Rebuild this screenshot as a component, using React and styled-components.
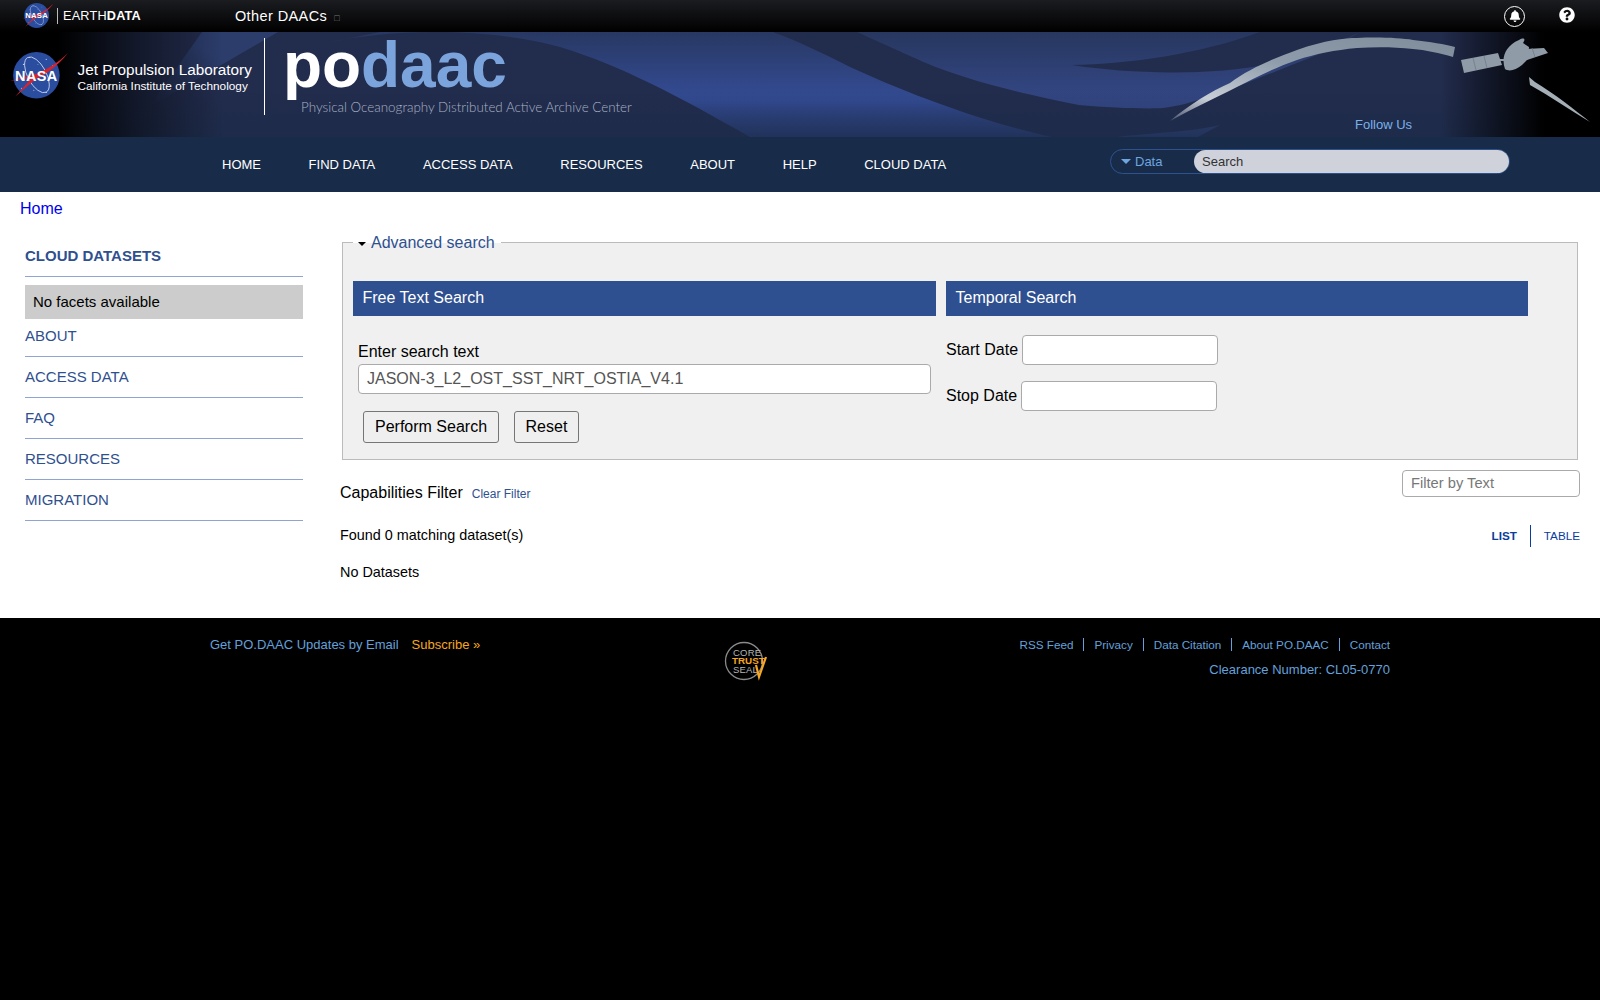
import React from 'react';
import styled, { createGlobalStyle } from 'styled-components';
import { FaBell, FaQuestionCircle } from 'react-icons/fa';

const Global = createGlobalStyle`
  html, body { margin: 0; padding: 0; background: #000; }
  body { font-family: "Liberation Sans", Arial, sans-serif; color: #000; }
  * { box-sizing: border-box; }
  a { text-decoration: none; }
`;

const Page = styled.div`
  width: 1600px;
  min-height: 1000px;
  display: flex;
  flex-direction: column;
  overflow: hidden;
`;

const TopBar = styled.div`
  height: 32px;
  display: flex;
  align-items: center;
  padding-left: 22px;
  background: linear-gradient(#1b1c20, #000);
  color: #fff;
`;
const EarthMark = styled.span`
  font-size: 12.7px;
  letter-spacing: .2px;
  border-left: 1px solid #bbb;
  padding-left: 5px;
  margin-left: 3px;
  line-height: 16px;
  b { font-weight: 700; }
`;
const Daacs = styled.span`
  margin-left: 94px;
  font-size: 14.5px;
  letter-spacing: .4px;
  i { font-style: normal; font-size: 9px; color: #777; margin-left: 7px; letter-spacing: 0; }
`;
const TopIcons = styled.div`
  margin-left: auto;
  display: flex;
  align-items: center;
  gap: 34px;
  padding-right: 25px;
`;
const BellRing = styled.span`
  width: 21px;
  height: 21px;
  border: 1.5px solid #fff;
  border-radius: 50%;
  display: flex;
  align-items: center;
  justify-content: center;
  font-size: 12px;
  color: #fff;
`;
const Help = styled.span`
  display: flex;
  font-size: 16px;
  color: #fff;
  margin-top: -2px;
`;

const Banner = styled.div`
  position: relative;
  height: 105px;
  background: #1f2b4b;
  display: flex;
  align-items: flex-start;
  padding-left: 9px;
  color: #fff;
`;
const BannerArt = styled.svg`
  position: absolute;
  inset: 0;
  width: 100%;
  height: 100%;
`;
const BannerItem = styled.div`
  position: relative;
  display: flex;
  margin-top: ${p => p.$top}px;
`;
const Jpl = styled.div`
  position: relative;
  margin: 29px 0 0 8.5px;
  width: 176px;
`;
const JplName = styled.div`
  font-size: 15.3px;
  line-height: 18px;
  white-space: nowrap;
`;
const JplSub = styled.div`
  font-size: 11.8px;
  line-height: 14px;
  white-space: nowrap;
`;
const BannerRule = styled.div`
  position: relative;
  width: 1px;
  height: 77px;
  background: #fff;
  margin: 6px 18px 0 10.5px;
`;
const FollowUs = styled.a`
  position: absolute;
  left: 1355px;
  bottom: 5px;
  font-size: 13px;
  color: #7ab2ea;
`;

const Nav = styled.nav`
  height: 55px;
  background: #182c4a;
  display: flex;
  align-items: center;
  padding: 0 90px 0 222px;
`;
const NavLinks = styled.div`
  display: flex;
  gap: 47.6px;
`;
const NavLink = styled.a`
  font-size: 13px;
  color: #fff;
  white-space: nowrap;
`;
const SearchBox = styled.div`
  margin-left: auto;
  margin-top: -6px;
  width: 400px;
  height: 25px;
  display: flex;
  border: 1px solid #2c5290;
  border-radius: 13px;
`;
const Scope = styled.div`
  width: 83px;
  display: flex;
  align-items: center;
  gap: 4px;
  padding-left: 10px;
  font-size: 13px;
  color: #6ea6e0;
`;
const Caret = styled.span`
  width: 0;
  height: 0;
  border-left: 5px solid transparent;
  border-right: 5px solid transparent;
  border-top: 5px solid #6ea6e0;
`;
const SearchText = styled.div`
  flex: 1;
  background: #cfd2da;
  border-radius: 12px;
  font-size: 13px;
  line-height: 23px;
  color: #333;
  padding-left: 8px;
`;

const Body = styled.div`
  background: #fff;
  height: 426px;
  padding-left: 20px;
`;
const Crumb = styled.a`
  display: block;
  height: 33px;
  padding-top: 8px;
  font-size: 16px;
  line-height: 18px;
  color: #0000ee;
`;
const Columns = styled.div`
  display: flex;
  padding-left: 5px;
`;
const Side = styled.aside`
  width: 278px;
  margin-right: 37px;
  padding-top: 22px;
`;
const SideTitle = styled.div`
  font-size: 15px;
  font-weight: 700;
  color: #2f5090;
  line-height: 18px;
  padding-bottom: 11px;
  border-bottom: 1px solid #8fa5d0;
`;
const Facets = styled.div`
  margin-top: 8px;
  height: 34px;
  background: #ccc;
  font-size: 15px;
  line-height: 34px;
  padding-left: 8px;
`;
const SideLink = styled.a`
  display: block;
  height: 41px;
  padding-top: 11px;
  font-size: 15px;
  line-height: 18px;
  color: #2f5090;
  border-bottom: 1px solid #8fa5d0;
  &:first-of-type { height: 38px; padding-top: 8px; }
`;
const Main = styled.div`
  width: 1240px;
`;
const Field = styled.fieldset`
  margin: 8px 0 0 2px;
  padding: 0 10px;
  width: 1236px;
  height: 227px;
  background: #f0f0f0;
  border: 1px solid #bbb;
  background-clip: padding-box;
`;
const Legend = styled.legend`
  display: flex;
  align-items: center;
  padding: 0 6px 0 5px;
  margin-left: 0;
  font-size: 16px;
  line-height: 18px;
  color: #2f5090;
  transform: translateY(1px);
`;
const LegendCaret = styled.span`
  width: 0;
  height: 0;
  border-left: 4px solid transparent;
  border-right: 4px solid transparent;
  border-top: 4px solid #000;
  margin: 2px 5px 0 0;
`;
const Panels = styled.div`
  display: flex;
  gap: 10px;
  padding-top: 30px;
`;
const Panel = styled.div`
  width: ${p => p.$w}px;
`;
const PanelHead = styled.div`
  height: 35px;
  background: #2f5090;
  color: #fff;
  font-size: 16px;
  line-height: 33px;
  padding-left: 9.5px;
`;
const PanelBody = styled.div`
  padding: ${p => p.$top}px 5px 0 ${p => p.$left}px;
`;
const FieldLabel = styled.div`
  font-size: 16px;
  line-height: 18px;
  margin-bottom: 3px;
`;
const TextField = styled.div`
  width: 573px;
  height: 30px;
  background: #fff;
  border: 1px solid #aaa;
  border-radius: 4px;
  font-size: 16px;
  line-height: 28px;
  color: #555;
  padding-left: 8px;
`;
const Actions = styled.div`
  display: flex;
  gap: 15px;
  padding: 17px 0 0 5px;
`;
const Btn = styled.button`
  height: 32px;
  padding: 0 ${p => p.$pad}px;
  background: #efefef;
  border: 1px solid #767676;
  border-radius: 3px;
  font: 16px "Liberation Sans", Arial, sans-serif;
  color: #000;
`;
const DateRow = styled.div`
  display: flex;
  align-items: center;
  gap: 4px;
  margin-bottom: ${p => p.$gap}px;
  font-size: 16px;
`;
const DateField = styled.div`
  width: 196px;
  height: 30px;
  background: #fff;
  border: 1px solid #aaa;
  border-radius: 4px;
`;
const FilterRow = styled.div`
  display: flex;
  justify-content: space-between;
  padding-top: 10px;
  height: 63px;
`;
const CapTitle = styled.div`
  font-size: 16px;
  line-height: 18px;
  padding-top: 14px;
  a { font-size: 12px; color: #2f5090; margin-left: 9px; }
`;
const FilterInput = styled.div`
  width: 178px;
  height: 27px;
  background: #fff;
  border: 1px solid #aaa;
  border-radius: 4px;
  font-size: 14.7px;
  line-height: 25px;
  color: #777;
  padding-left: 8px;
`;
const ResultRow = styled.div`
  display: flex;
  justify-content: space-between;
  align-items: center;
  font-size: 14.4px;
  height: 24px;
`;
const Views = styled.div`
  display: flex;
  align-items: center;
  font-size: 11.7px;
  line-height: 22px;
  color: #0a3d9c;
  margin-top: 1px;
  b { padding-right: 13px; border-right: 1px solid #0a3d9c; }
  span { padding-left: 13px; }
`;
const NoData = styled.div`
  font-size: 14.4px;
  line-height: 16px;
  margin-top: 17px;
`;

const Footer = styled.footer`
  flex: 1;
  background: #000;
  display: flex;
  justify-content: space-between;
  padding: 19px 210px 0;
  font-size: 13px;
  line-height: 16px;
  color: #64a0dc;
`;
const FooterLeft = styled.div`
  width: 327px;
  white-space: nowrap;
  a { color: #f5a623; margin-left: 13px; }
`;
const Seal = styled.svg`
  width: 44px;
  height: 42px;
  margin: 4px 0 0 -2px;
`;
const FooterRight = styled.div`
  width: 433px;
  text-align: right;
`;
const FooterLinks = styled.div`
  display: flex;
  justify-content: flex-end;
  font-size: 11.7px;
  margin: 0 0 11px;
  a { color: #64a0dc; padding: 0 10px; border-right: 1px solid #64a0dc; line-height: 13px; margin-top: 1px; }
  a:last-child { padding-right: 0; border-right: 0; }
`;
const NasaMark = styled.svg`
  display: block;
  flex: none;
`;
const LogoMark = styled.svg`
  display: block;
  overflow: visible;
`;

function NasaLogo({ width }) {
  return (
    <NasaMark width={width} viewBox="0 0 58 50">
      <circle cx="26.5" cy="24.5" r="22.5" fill="#2a4da0" />
      <g fill="#fff" opacity=".75">
        <circle cx="14" cy="14" r=".6" /><circle cx="36" cy="9" r=".6" /><circle cx="20" cy="7" r=".5" />
        <circle cx="42" cy="15" r=".5" /><circle cx="12" cy="37" r=".5" /><circle cx="36" cy="41" r=".6" />
        <circle cx="28" cy="14" r=".4" /><circle cx="24" cy="39" r=".5" />
      </g>
      <ellipse cx="27" cy="24" rx="9" ry="19" transform="rotate(-28 27 24)" fill="none" stroke="#dfe7f5" strokeWidth=".7" />
      <path d="M57 3C46 17 33 25 26 28L6 45 22 27 1 30 24 24C35 20 47 13 57 3Z" fill="#d9232e" />
      <text x="26.5" y="29.5" textAnchor="middle" fontFamily="Liberation Sans" fontWeight="700" fontSize="14" letterSpacing=".4" fill="#fff">NASA</text>
    </NasaMark>
  );
}

function Art() {
  return (
    <BannerArt viewBox="0 0 1600 105" preserveAspectRatio="none">
      <defs>
        <linearGradient id="bl" x1="0" x2="0" y1="0" y2="1">
          <stop offset="0" stopColor="#283862" />
          <stop offset=".65" stopColor="#344c96" />
          <stop offset="1" stopColor="#2a3d72" />
        </linearGradient>
        <linearGradient id="br" x1="0" x2="0" y1="0" y2="1">
          <stop offset="0" stopColor="#27375f" />
          <stop offset="1" stopColor="#35498a" />
        </linearGradient>
        <linearGradient id="streak" x1="0" x2="1" y1="1" y2="0">
          <stop offset="0" stopColor="#2a3a66" stopOpacity="0" />
          <stop offset=".6" stopColor="#2c3d6c" />
        </linearGradient>
        <linearGradient id="sides" x1="0" x2="1" y1="0" y2="0">
          <stop offset="0" stopColor="#000" />
          <stop offset=".036" stopColor="#000" />
          <stop offset=".085" stopColor="#000" stopOpacity=".45" />
          <stop offset=".14" stopColor="#000" stopOpacity="0" />
          <stop offset=".9" stopColor="#000" stopOpacity="0" />
          <stop offset=".965" stopColor="#000" />
          <stop offset="1" stopColor="#000" />
        </linearGradient>
        <linearGradient id="bottom" x1="0" x2="0" y1="0" y2="1">
          <stop offset=".55" stopColor="#1a2a48" stopOpacity="0" />
          <stop offset="1" stopColor="#1a2a48" stopOpacity=".55" />
        </linearGradient>
        <linearGradient id="swoosh" x1="0" x2="1" y1="1" y2="0">
          <stop offset="0" stopColor="#dfe3e8" stopOpacity=".2" />
          <stop offset=".2" stopColor="#c8ced6" />
          <stop offset=".55" stopColor="#8d9baa" />
          <stop offset="1" stopColor="#7f8d9b" />
        </linearGradient>
      </defs>
      <rect width="1600" height="105" fill="#222c4d" />
      <polygon points="149,75 202,0 278,0" fill="url(#streak)" />
      <path d="M327 11C400-6 500-2 560 15 620 33 680 65 750 105L1052 105C1003 95 926 70 850 35 820 20 800 10 773 0L380 0Z" fill="url(#bl)" />
      <path d="M857 0C890 15 926 31 926 31 960 45 1003 58 1079 73 1110 76 1150 77 1163 76 1200 72 1247 50 1330 18L1360 0Z" fill="url(#br)" />
      <path d="M1072 33C1130 32 1200 22 1260 0L1360 0C1330 14 1300 26 1270 32 1210 44 1130 42 1072 33Z" fill="#222c4d" />
      <path d="M1117 105C1160 100 1190 100 1220 93L1198 105Z" fill="#2d3f72" />
      <rect width="1600" height="105" fill="url(#bottom)" />
      <rect width="1600" height="105" fill="url(#sides)" />
      <path d="M1170 89C1190 72 1210 60 1230 51 1250 36 1275 26 1297 18 1325 8 1345 6 1357 6 1380 5 1400 6 1413 8 1430 10 1445 12 1455 15L1453 25C1440 21 1425 18 1413 17 1395 15 1375 15 1357 16 1335 18 1315 22 1297 28 1280 34 1262 42 1247 50 1220 64 1195 75 1170 89Z" fill="url(#swoosh)" />
      <g fill="#8f9ba6">
        <polygon points="1461,28 1498,21 1502,33 1464,41" />
        <polygon points="1526,17 1544,16 1548,21 1527,28" />
        <rect x="1500" y="27" width="7" height="2" />
        <path d="M1505 37C1501 26 1505 14 1519 8 1524 5 1526 7 1523 11L1529 15 1528 27 1522 33C1516 38 1509 40 1505 37Z" />
      </g>
      <g stroke="#707c88" strokeWidth=".8">
        <line x1="1473" y1="26" x2="1476" y2="38" />
        <line x1="1484" y1="24" x2="1487" y2="36" />
        <line x1="1532" y1="16" x2="1535" y2="25" />
      </g>
      <path d="M1529 45L1535 50C1555 62 1575 78 1590 90 1570 78 1550 64 1530 53Z" fill="#a4afb8" />
    </BannerArt>
  );
}

function PodaacLogo() {
  return (
    <LogoMark width="357" height="78" viewBox="0 0 357 78">
      <text x="0" y="49" fontFamily="Liberation Sans" fontWeight="700" fontSize="64" fill="#fff">po</text>
      <text x="78" y="49" fontFamily="Liberation Sans" fontWeight="700" fontSize="64" fill="#7ba4dc">daac</text>
      <text x="18" y="74" fontFamily="Lato" fontWeight="300" fontSize="13.4" fill="#a9b2c4">Physical Oceanography Distributed Active Archive Center</text>
    </LogoMark>
  );
}

const navItems = ['HOME', 'FIND DATA', 'ACCESS DATA', 'RESOURCES', 'ABOUT', 'HELP', 'CLOUD DATA'];
const sideItems = ['ABOUT', 'ACCESS DATA', 'FAQ', 'RESOURCES', 'MIGRATION'];
const footerLinks = ['RSS Feed', 'Privacy', 'Data Citation', 'About PO.DAAC', 'Contact'];

export default function App() {
  return (
    <Page>
      <Global />
      <TopBar>
        <NasaLogo width={32} />
        <EarthMark>EARTH<b>DATA</b></EarthMark>
        <Daacs>Other DAACs<i>□</i></Daacs>
        <TopIcons>
          <BellRing><FaBell /></BellRing>
          <Help><FaQuestionCircle /></Help>
        </TopIcons>
      </TopBar>
      <Banner>
        <Art />
        <BannerItem $top={18}><NasaLogo width={60} /></BannerItem>
        <Jpl>
          <JplName>Jet Propulsion Laboratory</JplName>
          <JplSub>California Institute of Technology</JplSub>
        </Jpl>
        <BannerRule />
        <BannerItem $top={6}><PodaacLogo /></BannerItem>
        <FollowUs>Follow Us</FollowUs>
      </Banner>
      <Nav>
        <NavLinks>
          {navItems.map(n => <NavLink key={n}>{n}</NavLink>)}
        </NavLinks>
        <SearchBox>
          <Scope><Caret />Data</Scope>
          <SearchText>Search</SearchText>
        </SearchBox>
      </Nav>
      <Body>
        <Crumb>Home</Crumb>
        <Columns>
          <Side>
            <SideTitle>CLOUD DATASETS</SideTitle>
            <Facets>No facets available</Facets>
            {sideItems.map(s => <SideLink key={s}>{s}</SideLink>)}
          </Side>
          <Main>
            <Field>
              <Legend><LegendCaret />Advanced search</Legend>
              <Panels>
                <Panel $w={583}>
                  <PanelHead>Free Text Search</PanelHead>
                  <PanelBody $top={27} $left={5}>
                    <FieldLabel>Enter search text</FieldLabel>
                    <TextField>JASON-3_L2_OST_SST_NRT_OSTIA_V4.1</TextField>
                    <Actions>
                      <Btn $pad={11}>Perform Search</Btn>
                      <Btn $pad={10.5}>Reset</Btn>
                    </Actions>
                  </PanelBody>
                </Panel>
                <Panel $w={582}>
                  <PanelHead>Temporal Search</PanelHead>
                  <PanelBody $top={19} $left={0}>
                    <DateRow $gap={16}>Start Date<DateField /></DateRow>
                    <DateRow $gap={0}>Stop Date<DateField /></DateRow>
                  </PanelBody>
                </Panel>
              </Panels>
            </Field>
            <FilterRow>
              <CapTitle>Capabilities Filter<a>Clear Filter</a></CapTitle>
              <FilterInput>Filter by Text</FilterInput>
            </FilterRow>
            <ResultRow>
              <span>Found 0 matching dataset(s)</span>
              <Views><b>LIST</b><span>TABLE</span></Views>
            </ResultRow>
            <NoData>No Datasets</NoData>
          </Main>
        </Columns>
      </Body>
      <Footer>
        <FooterLeft>Get PO.DAAC Updates by Email<a>Subscribe »</a></FooterLeft>
        <Seal viewBox="0 0 44 42">
          <circle cx="20" cy="20" r="18.5" fill="none" stroke="#8a8a8a" strokeWidth="1.3" />
          <text x="9" y="14.5" fontFamily="Liberation Sans" fontSize="9.5" letterSpacing=".2" fill="#b5b5b5">CORE</text>
          <text x="8" y="23" fontFamily="Liberation Sans" fontWeight="700" fontSize="9.8" fill="#f5a623">TRUST</text>
          <text x="9" y="31.5" fontFamily="Liberation Sans" fontSize="9.5" letterSpacing=".2" fill="#b5b5b5">SEAL</text>
          <path d="M32 24L35 36 42 16" fill="none" stroke="#f5a623" strokeWidth="2.2" />
        </Seal>
        <FooterRight>
          <FooterLinks>{footerLinks.map(l => <a key={l}>{l}</a>)}</FooterLinks>
          Clearance Number: CL05-0770
        </FooterRight>
      </Footer>
    </Page>
  );
}
